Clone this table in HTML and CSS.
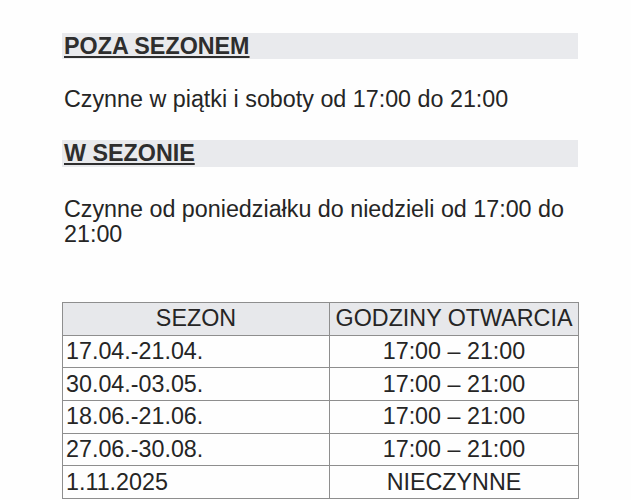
FILE: index.html
```html
<!DOCTYPE html>
<html lang="pl">
<head>
<meta charset="utf-8">
<title>Godziny otwarcia</title>
<link rel="stylesheet" href="styles.css">
</head>
<body>
<main class="page">
  <h2 class="bar bar-first"><span class="bar-text">POZA SEZONEM</span></h2>
  <p class="para para-first">Czynne w piątki i soboty od 17:00 do 21:00</p>
  <h2 class="bar bar-second"><span class="bar-text">W SEZONIE</span></h2>
  <p class="para para-second">Czynne od poniedziałku do niedzieli od 17:00 do 21:00</p>
  <table class="hours">
    <thead>
      <tr><th class="col-season">SEZON</th><th class="col-hours">GODZINY OTWARCIA</th></tr>
    </thead>
    <tbody>
      <tr><td class="cell-left">17.04.-21.04.</td><td class="cell-center">17:00 – 21:00</td></tr>
      <tr><td class="cell-left">30.04.-03.05.</td><td class="cell-center">17:00 – 21:00</td></tr>
      <tr><td class="cell-left">18.06.-21.06.</td><td class="cell-center">17:00 – 21:00</td></tr>
      <tr><td class="cell-left">27.06.-30.08.</td><td class="cell-center">17:00 – 21:00</td></tr>
      <tr><td class="cell-left">1.11.2025</td><td class="cell-center">NIECZYNNE</td></tr>
    </tbody>
  </table>
</main>
</body>
</html>
```
FILE: styles.css
```css
html, body {
  margin: 0;
  padding: 0;
  background: #fefefe;
}

body {
  font-family: "Liberation Sans", Arial, sans-serif;
  font-size: 23.3px;
  color: #252525;
}

.page {
  width: 516px;
  padding: 33px 0 0 62px;
}

.bar {
  margin: 0;
  height: 26px;
  padding: 1px 0 0 2px;
  box-sizing: border-box;
  background: #e9eaed;
  font-size: 23.3px;
  line-height: 25px;
  font-weight: bold;
  color: #2e2e2e;
}

.bar-text {
  text-decoration: underline;
  text-decoration-thickness: 2px;
  text-underline-offset: 2px;
}

.bar-second {
  height: 27px;
}

.para {
  margin: 0;
  padding-left: 2px;
  line-height: 25px;
}

.para-first {
  margin-top: 28px;
  margin-bottom: 28px;
}

.para-second {
  margin-top: 30px;
  margin-bottom: 55px;
}

.hours {
  width: 517px;
  border-collapse: collapse;
  table-layout: fixed;
  font-size: 23.3px;
}

.hours th,
.hours td {
  border: 1px solid #8e8e8e;
  height: 31.7px;
  padding: 0 3px;
  line-height: 25px;
  white-space: nowrap;
  overflow: visible;
}

.hours th {
  background: #e7e8eb;
  font-weight: normal;
  text-align: center;
}

.col-season {
  width: 260px;
}

.cell-left {
  text-align: left;
}

.cell-center {
  text-align: center;
}
```
